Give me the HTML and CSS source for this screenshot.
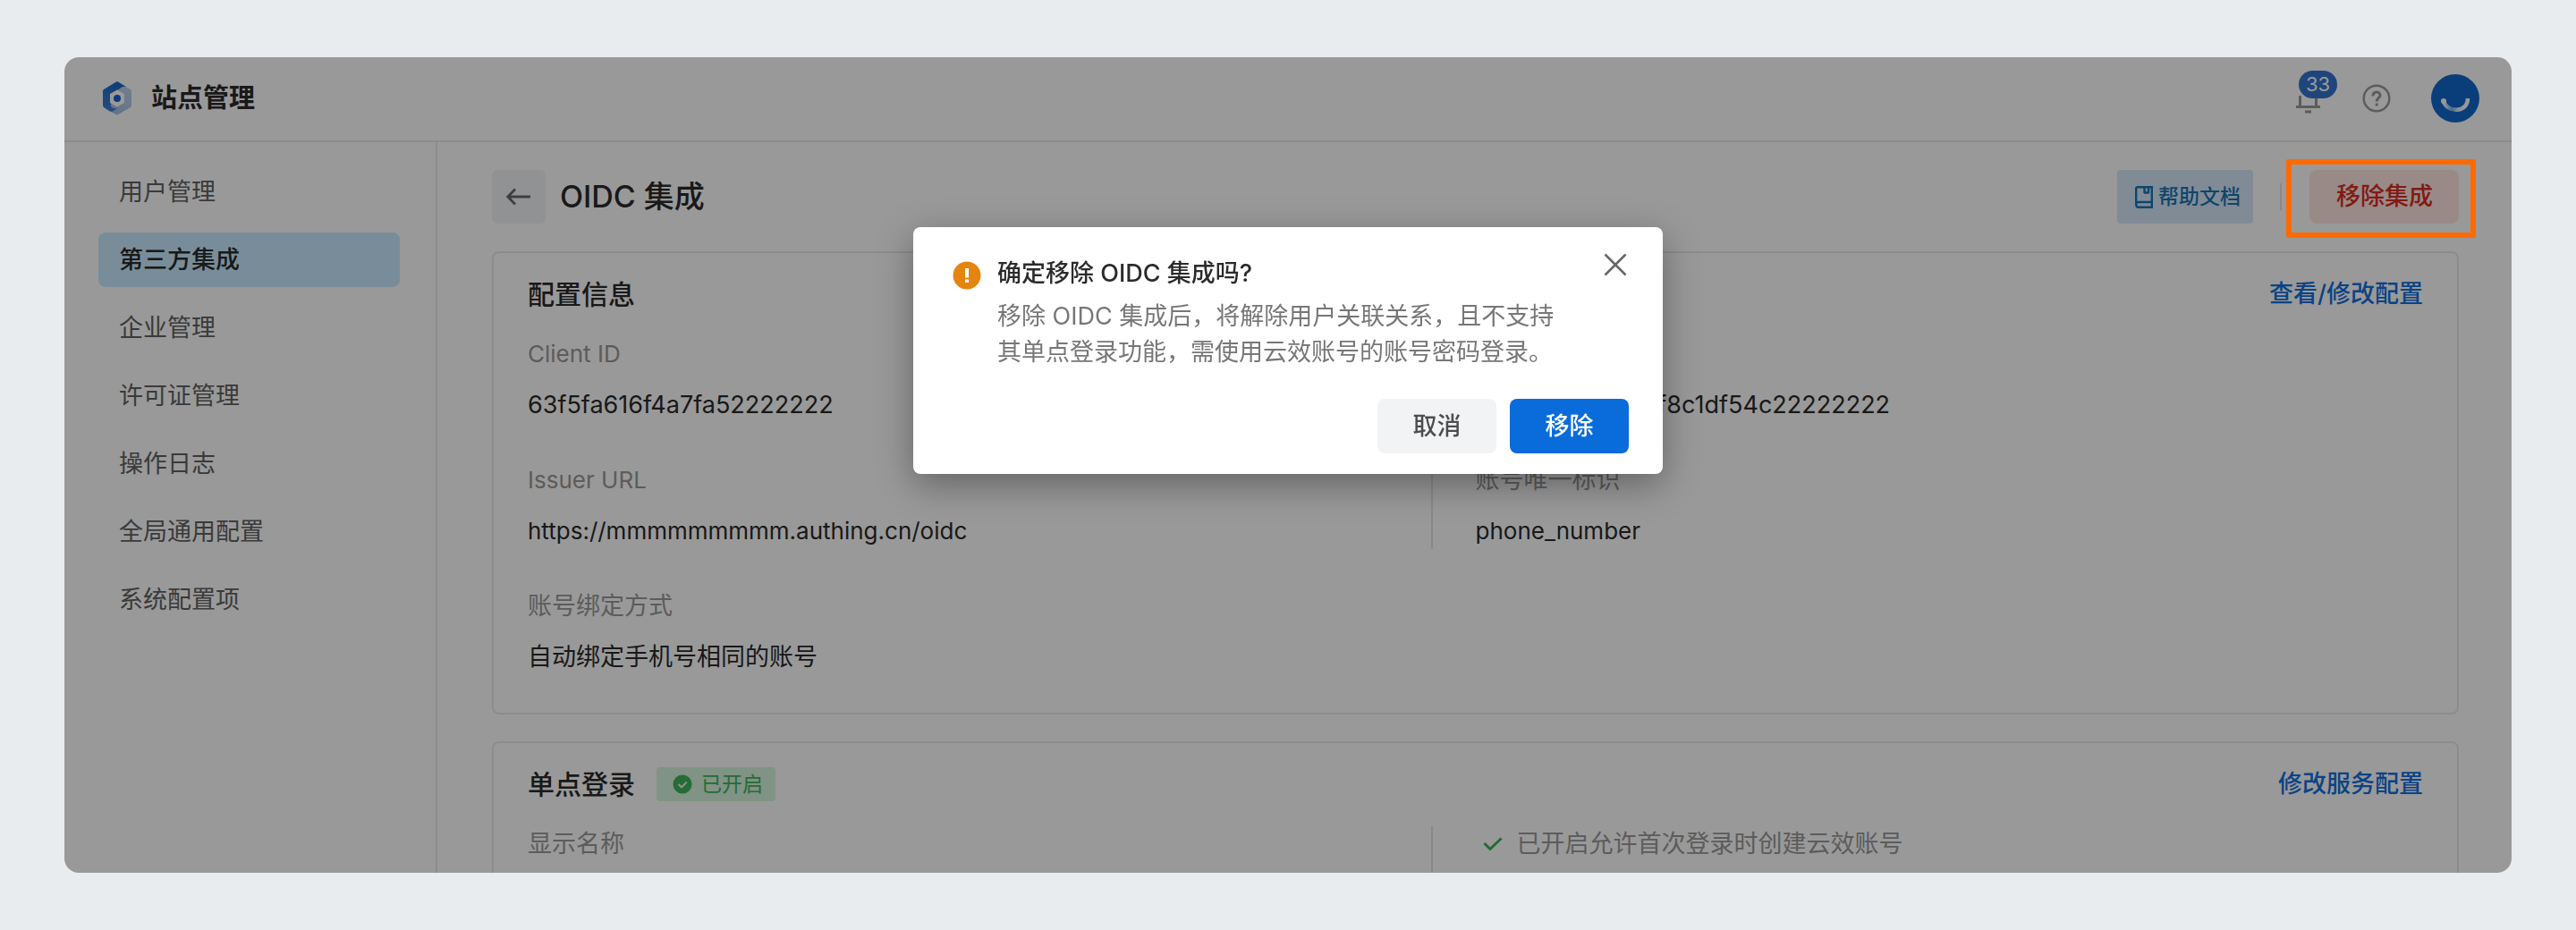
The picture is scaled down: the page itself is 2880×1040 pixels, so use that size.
FILE: index.html
```html
<!DOCTYPE html>
<html lang="zh-CN">
<head>
<meta charset="utf-8">
<title>站点管理</title>
<link rel="stylesheet" href="styles.css">
</head>
<body>
<div class="window">
  <header class="topbar">
    <svg class="logo" viewBox="0 0 32 38" aria-hidden="true">
      <defs>
        <linearGradient id="logo-dark" x1="0.6" y1="0" x2="0.3" y2="1"><stop offset="0" stop-color="#1765c8"/><stop offset="1" stop-color="#3f7fd6"/></linearGradient>
        <linearGradient id="logo-light" x1="0.8" y1="0" x2="0.3" y2="1"><stop offset="0" stop-color="#c0d2ec"/><stop offset="1" stop-color="#a4bfe4"/></linearGradient>
      </defs>
      <path fill="url(#logo-light)" d="M24 5 31 9Q32 10 32 11V27Q32 28 31 29L17 37Q16 38 15 37L7 33 17 8Z"/>
      <path fill="url(#logo-dark)" d="M15 .6Q16 0 17 .6L26 6Q22 5 19 8L12 13 9 28Q12 32 17 29L12 33Q9 34 7 33L1 29Q0 28 0 27V11Q0 10 1 9Z"/>
      <path fill="#fff" d="M16 9.500 24 14V24L16 28.500 8 24V14Z"/>
      <circle cx="16" cy="19" r="4" fill="#1262d0"/>
    </svg>
    <h1 class="site-name">站点管理</h1>
    <div class="top-tools">
      <button class="icon-button bell" type="button" aria-label="通知">
        <svg viewBox="0 0 28 34" width="28" height="34" aria-hidden="true"><path d="M0 26.500H27M4.500 26V14M22.500 26V14M10 32H17" fill="none" stroke="#999" stroke-width="3"/></svg>
        <span class="badge">33</span>
      </button>
      <button class="icon-button" type="button" aria-label="帮助">
        <svg viewBox="0 0 32 32" width="32" height="32" aria-hidden="true"><g fill="none" stroke="#999" stroke-width="2.500"><circle cx="16" cy="16" r="14.300"/><path stroke-width="3" d="M12 13.500C12 7.500 20 8 20 12.500 20 15.500 16.200 15.500 16.200 19.500M16.200 21.500V24.500"/></g></svg>
      </button>
      <button class="icon-button avatar" type="button" aria-label="个人中心">
        <svg viewBox="0 0 54 54" width="54" height="54" aria-hidden="true">
          <defs><linearGradient id="smile" x1="0" x2="1"><stop offset="0" stop-color="#fff"/><stop offset=".35" stop-color="#7fb0e8"/><stop offset=".6" stop-color="#e8f2ff"/><stop offset="1" stop-color="#fff"/></linearGradient></defs>
          <circle cx="27" cy="27" r="27" fill="#0f68cc"/>
          <path d="M14 30C17 43 41 44 41 27" fill="none" stroke="url(#smile)" stroke-width="4.500"/>
          <circle cx="14" cy="30" r="3" fill="#fff"/>
        </svg>
      </button>
    </div>
  </header>
  <div class="body">
    <nav class="sidebar">
      <a class="nav-item" href="#">用户管理</a>
      <a class="nav-item nav-active" href="#">第三方集成</a>
      <a class="nav-item" href="#">企业管理</a>
      <a class="nav-item" href="#">许可证管理</a>
      <a class="nav-item" href="#">操作日志</a>
      <a class="nav-item" href="#">全局通用配置</a>
      <a class="nav-item" href="#">系统配置项</a>
    </nav>
    <main class="content">
      <div class="page-head">
        <button class="back" type="button" aria-label="返回">
          <svg viewBox="0 0 28 20" width="28" height="20" aria-hidden="true"><path d="M27 10H2M10 1.500 1.800 10 10 18.500" fill="none" stroke="#6a6a6a" stroke-width="2.800"/></svg>
        </button>
        <h2 class="page-title">OIDC 集成</h2>
        <a class="doc-link" href="#">
          <svg viewBox="0 0 20 25" width="20" height="25" aria-hidden="true"><path d="M1.200 20.500V3Q1.200 1.200 3 1.200H18.800V23.800H4Q1.200 23.800 1.200 20.800T4 18H18.800M10.500 1V8M15 1V8M10 7.500H15.500" fill="none" stroke="currentColor" stroke-width="2.400"/></svg>
          帮助文档
        </a>
        <span class="head-divider"></span>
        <div class="remove-wrap">
          <button class="remove" type="button">移除集成</button>
          <span class="highlight"></span>
        </div>
      </div>
      <section class="card">
        <div class="card-head">
          <h3 class="card-title">配置信息</h3>
          <a class="card-link" href="#">查看/修改配置</a>
        </div>
        <dl class="fields">
          <div class="field field-ruled"><dt class="latin">Client ID</dt><dd>63f5fa616f4a7fa52222222</dd></div>
          <div class="field"><dt class="latin">Client Secret</dt><dd>5b1c9e07a46d2f8c1df54c22222222</dd></div>
          <div class="field field-ruled"><dt class="latin">Issuer URL</dt><dd class="latin">https://mmmmmmmmm.authing.cn/oidc</dd></div>
          <div class="field"><dt>账号唯一标识</dt><dd class="latin">phone_number</dd></div>
          <div class="field"><dt>账号绑定方式</dt><dd>自动绑定手机号相同的账号</dd></div>
        </dl>
      </section>
      <section class="card">
        <div class="card-head">
          <h3 class="card-title">单点登录</h3>
          <span class="tag">
            <svg viewBox="0 0 22 22" width="22" height="22" aria-hidden="true"><circle cx="11" cy="11" r="10.500" fill="#3fb45c"/><path d="M6.500 11 10 14.300 15.800 8.500" fill="none" stroke="#e4f5e8" stroke-width="2"/></svg>
            已开启
          </span>
          <a class="card-link" href="#">修改服务配置</a>
        </div>
        <dl class="fields">
          <div class="field field-ruled"><dt>显示名称</dt></div>
          <div class="field"><dt class="checked"><svg viewBox="0 0 22 16" width="22" height="16" aria-hidden="true"><path d="M1.500 7 8 13.500 20.500 1.500" fill="none" stroke="#38b259" stroke-width="3"/></svg>已开启允许首次登录时创建云效账号</dt></div>
        </dl>
      </section>
    </main>
  </div>
  <div class="mask"></div>
</div>
<div class="dialog" role="alertdialog" aria-labelledby="dialog-title" aria-describedby="dialog-text">
  <div class="dialog-main">
    <svg class="warn" viewBox="0 0 32 32" width="32" height="32" aria-hidden="true"><circle cx="16" cy="16" r="15.500" fill="#e5850f"/><path d="M16 8V18.500M16 20.500V24" stroke="#fff" stroke-width="4"/></svg>
    <div>
      <h2 class="dialog-title" id="dialog-title">确定移除 OIDC 集成吗?</h2>
      <p class="dialog-text" id="dialog-text">移除 OIDC 集成后，将解除用户关联关系，且不支持<br>其单点登录功能，需使用云效账号的账号密码登录。</p>
    </div>
    <button class="icon-button close" type="button" aria-label="关闭">
      <svg viewBox="0 0 26 26" width="26" height="26" aria-hidden="true"><path d="M1.500 1.500 24.500 24.500M24.500 1.500 1.500 24.500" stroke="#666" stroke-width="2.500"/></svg>
    </button>
  </div>
  <div class="dialog-actions">
    <button class="button" type="button">取消</button>
    <button class="button button-primary" type="button">移除</button>
  </div>
</div>
</body>
</html>
```

FILE: styles.css
```css
* { box-sizing: border-box; }

body {
  margin: 0;
  height: 100vh;
  padding: 64px 72px;
  display: flex;
  background: #e8ecef;
  color: #2b2b2b;
  font: 400 27px/40px Inter, "Noto Sans CJK SC", sans-serif;
}

h1, h2, h3, p, dl, dd { margin: 0; }
a { text-decoration: none; }
svg { display: block; flex: none; }

button {
  border: 0;
  padding: 0;
  font: inherit;
  cursor: pointer;
}

.latin { font-size: 26px; }

.window {
  position: relative;
  flex: 1;
  display: flex;
  flex-direction: column;
  overflow: hidden;
  border-radius: 16px;
  background: #fff;
}

.mask {
  position: absolute;
  inset: 0;
  background: rgba(0, 0, 0, .4);
}

.topbar {
  flex: none;
  display: flex;
  align-items: center;
  height: 95px;
  padding: 0 36px 2px 43px;
  border-bottom: 2px solid #e9eaec;
}

.logo { width: 32px; height: 38px; }

.site-name {
  margin-left: 22px;
  font-size: 29px;
  font-weight: 600;
}

.top-tools {
  margin-left: auto;
  display: flex;
  align-items: center;
}

.icon-button { background: none; }
.bell { position: relative; margin-right: 46px; }
.avatar { margin-left: 45px; }

.badge {
  position: absolute;
  left: 3px;
  top: -14px;
  padding: 0 8px;
  border-radius: 16px;
  background: #3474d0;
  color: #fff;
  font-size: 22px;
  line-height: 31px;
}

.body {
  flex: 1;
  min-height: 0;
  display: flex;
}

.sidebar {
  flex: none;
  width: 417px;
  padding: 25px 40px 0 38px;
  border-right: 2px solid #e9eaec;
  display: flex;
  flex-direction: column;
  gap: 15px;
}

.nav-item {
  padding: 11px 23px 10px;
  border-radius: 8px;
  color: #626262;
}

.nav-active {
  background: #c8ecff;
  color: #2b2b2b;
  font-weight: 500;
}

.content {
  flex: 1;
  min-width: 0;
  padding: 31px 59px 0 61px;
  overflow: hidden;
}

.page-head {
  display: flex;
  align-items: center;
  margin-bottom: 31px;
}

.back {
  width: 60px;
  height: 60px;
  border-radius: 6px;
  background: #f1f4f6;
  display: grid;
  place-items: center;
}

.page-title {
  margin-left: 16px;
  font-size: 34px;
  font-weight: 500;
}

.doc-link {
  margin-left: auto;
  display: flex;
  align-items: center;
  gap: 6px;
  padding: 10px 14px 10px 20px;
  border-radius: 4px;
  background: #d5e8fb;
  color: #1b73b3;
  font-size: 23px;
  font-weight: 500;
}

.head-divider {
  width: 2px;
  height: 30px;
  margin: 0 31px 0 30px;
  background: #e3e4e6;
}

.remove-wrap { position: relative; }

.remove {
  display: block;
  padding: 10px 29px 10px 30px;
  border-radius: 8px;
  background: #ffe6e3;
  color: #d92c20;
  font-weight: 500;
}

.highlight {
  position: absolute;
  inset: -12px -19px -16px -26px;
  z-index: 2;
  border: 6px solid #ff6a00;
  border-radius: 2px;
}

.card {
  margin-bottom: 30px;
  padding: 26px 38px 42px;
  border: 2px solid #e9eaec;
  border-radius: 8px;
}

.card-head {
  display: flex;
  align-items: center;
  margin-bottom: 27px;
}

.card-title {
  font-size: 30px;
  font-weight: 500;
}

.card-link {
  margin-left: auto;
  color: #1170de;
  font-weight: 500;
}

.fields {
  display: grid;
  grid-template-columns: 1fr 1fr;
  row-gap: 44px;
}

.field { min-height: 97px; }
.field-ruled { margin-right: 48px; border-right: 2px solid #e3e4e6; }
.field dt { color: #9a9a9a; }
.field dd { margin-top: 17px; }

.field .checked {
  display: flex;
  align-items: center;
  gap: 16px;
  padding-left: 8px;
}

.tag {
  display: flex;
  align-items: center;
  gap: 10px;
  margin-left: 24px;
  padding: 0 14px 0 18px;
  border-radius: 4px;
  background: #d6f6dc;
  color: #40b25e;
  font-size: 23px;
  line-height: 38px;
}

.dialog {
  position: fixed;
  left: 50%;
  top: 254px;
  transform: translateX(-50%);
  width: 838px;
  padding: 32px 38px 23px 44px;
  border-radius: 8px;
  background: #fff;
  box-shadow: 0 12px 40px rgba(0, 0, 0, .35);
}

.dialog-main {
  display: flex;
  align-items: flex-start;
}

.warn { margin: 6px 18px 0 0; }

.dialog-title {
  margin-bottom: 8px;
  font-size: 27px;
  font-weight: 500;
}

.dialog-text { color: #777; white-space: nowrap; }

.close { margin: -3px 2px 0 auto; }

.dialog-actions {
  display: flex;
  justify-content: flex-end;
  gap: 15px;
  margin-top: 32px;
}

.button {
  width: 133px;
  padding: 11px 0 10px;
  border-radius: 8px;
  background: #f2f3f5;
  color: #4d4d4d;
  font-weight: 500;
}

.button-primary {
  background: #0a6cda;
  color: #fff;
}
```
